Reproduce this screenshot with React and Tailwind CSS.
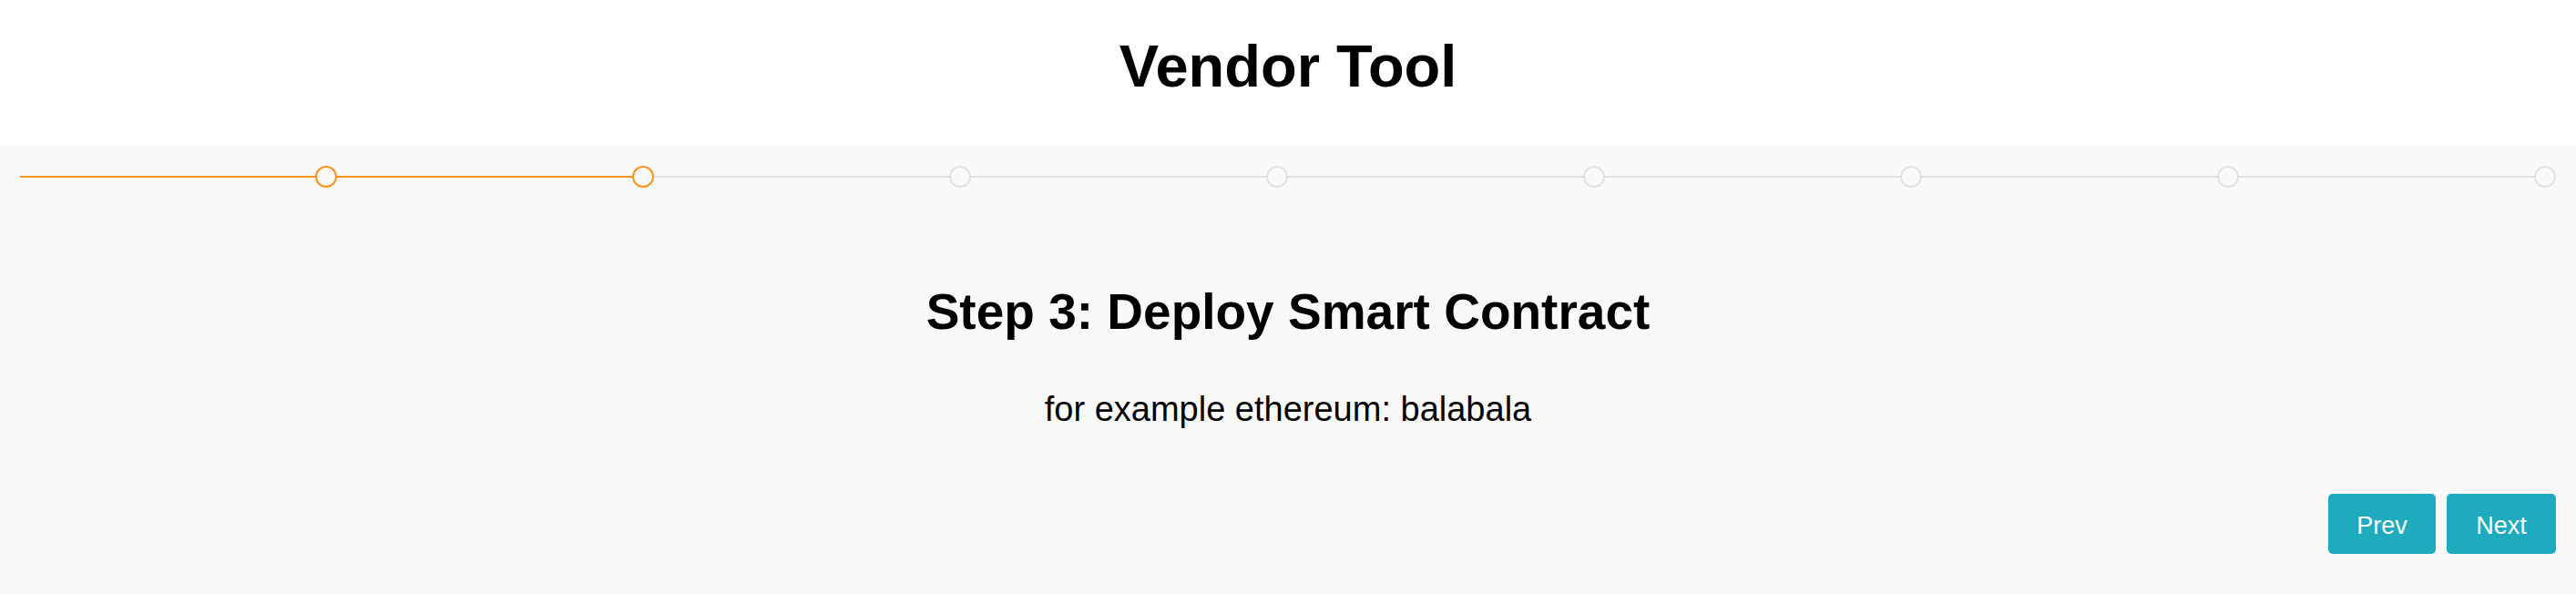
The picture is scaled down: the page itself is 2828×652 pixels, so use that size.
import React from "react";

const STEPS = 8;
const DONE = 2;

export default function App() {
  const font = { fontFamily: '"Liberation Sans", Arial, Helvetica, sans-serif' };
  return (
    <div className="w-full min-h-[652px] flex flex-col text-black" style={font}>
      <header className="h-[160px] bg-white pt-[40px]">
        <h1 className="text-center text-[65px] leading-[65px] font-bold">Vendor Tool</h1>
      </header>
      <main className="flex-1 bg-[#f9f9f9] flex flex-col pt-[22px] pb-[44px]">
        <div className="px-[22px] flex items-center h-6">
          {Array.from({ length: STEPS }).map((_, i) => {
            const active = i < DONE;
            return (
              <div key={i} className="flex-1 flex items-center">
                <div className={active ? "flex-1 h-[2px] bg-[#f7931e]" : "flex-1 h-[2px] bg-[#e0e0e0]"} />
                <div
                  className={
                    active
                      ? "w-6 h-6 rounded-full border-2 border-[#f7931e] bg-[#f9f9f9]"
                      : "w-6 h-6 rounded-full border-2 border-[#e0e0e0] bg-[#f9f9f9]"
                  }
                />
              </div>
            );
          })}
        </div>
        <h2 className="mt-[109px] text-center text-[55px] leading-[55px] font-bold">
          Step 3: Deploy Smart Contract
        </h2>
        <p className="mt-[60px] text-center text-[38px] leading-[38px]">for example ethereum: balabala</p>
        <div className="mt-[74px] px-[22px] flex justify-end gap-[12px]">
          <button className="w-[118px] h-[66px] pt-[4px] rounded-[5px] bg-[#1eabbe] text-white text-[27px] leading-[27px]">
            Prev
          </button>
          <button className="w-[120px] h-[66px] pt-[4px] rounded-[5px] bg-[#1eabbe] text-white text-[27px] leading-[27px]">
            Next
          </button>
        </div>
      </main>
    </div>
  );
}
